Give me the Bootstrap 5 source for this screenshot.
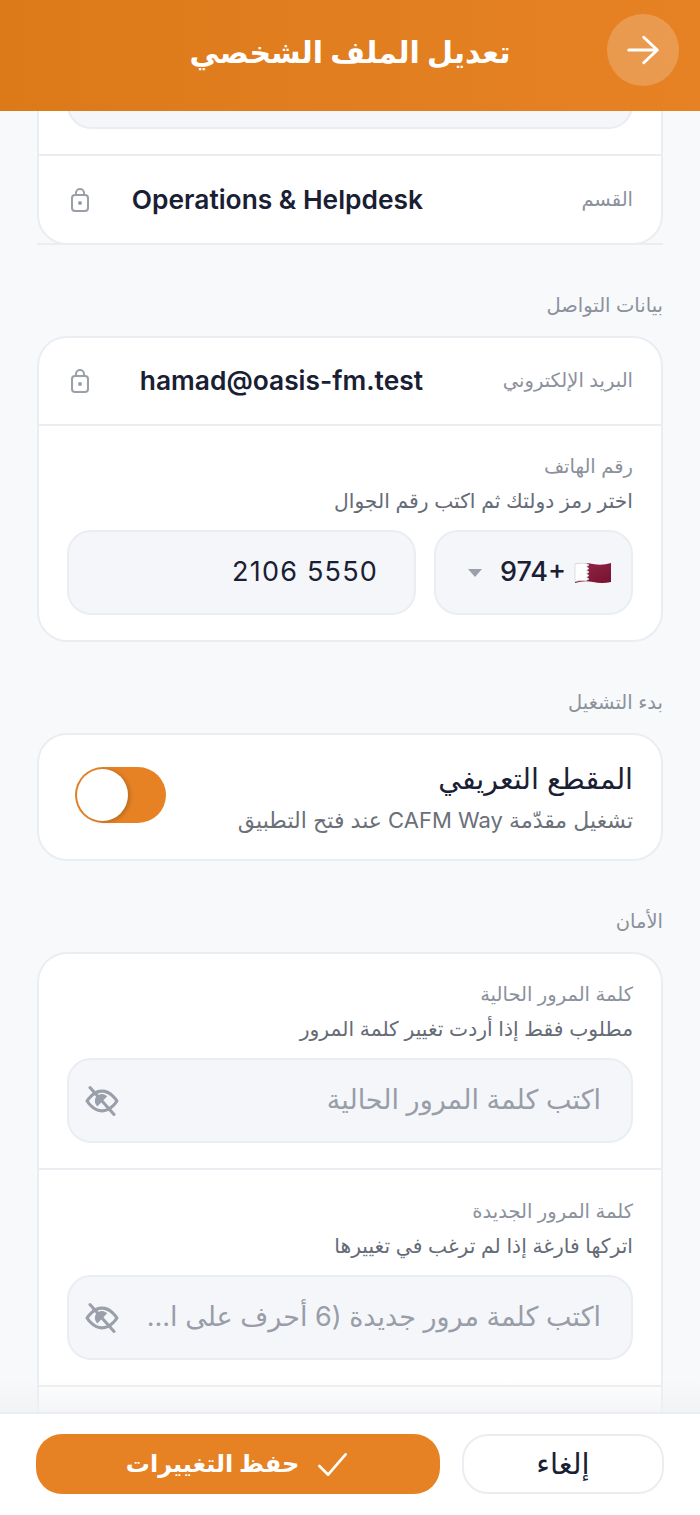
<!DOCTYPE html>
<html lang="ar" dir="rtl">
<head>
    <meta charset="UTF-8">
    <meta name="viewport" content="width=device-width, initial-scale=1.0">
    <title>تعديل الملف الشخصي</title>
    <link href="https://cdn.jsdelivr.net/npm/bootstrap@5.3.0/dist/css/bootstrap.min.css" rel="stylesheet">
    <script src="https://cdn.jsdelivr.net/npm/bootstrap@5.3.0/dist/js/bootstrap.bundle.min.js"></script>
    <style>
        :root { --brand: #e68224; --line: #eaedf1; --muted: #8b919c; --ink: #1a2033; }
        html, body { height: 1515px; overflow: hidden; }
        body { font-family: Inter, "DejaVu Sans", sans-serif; background-color: #f8f9fb; color: var(--ink); }
        .page-shell { height: 1515px; }
        .top-bar { height: 111px; background: linear-gradient(90deg, #dc7a1a, #e68224); padding: 0 21px; position: relative; flex-shrink: 0; z-index: 2; }
        .top-title { font-size: 30px; font-weight: 700; color: #fff; padding-bottom: 6px; }
        .back-btn { width: 72px; height: 72px; border-radius: 50%; background: rgba(255,255,255,.2); position: absolute; right: 21px; top: 14px; border: 0; padding: 0; }
        .scroll-area { flex: 1; overflow: hidden; position: relative; padding: 0 37px; }
        .scroll-area::after { content: ""; position: absolute; left: 0; right: 0; bottom: 0; height: 34px; background: linear-gradient(rgba(248,249,251,0), rgba(240,241,243,.75)); }
        .first-block { margin-top: -97px; }
        .first-block .value-row { height: 89px; }
        .section-title { font-size: 19.5px; color: var(--muted); line-height: 26px; margin: 47px 0 18px; }
        .form-block { background: #fff; border: 2px solid var(--line); border-radius: 30px; }
        .form-block.open-end { border-radius: 30px 30px 0 0; border-bottom: 0; }
        .value-row { height: 86px; padding: 0 28px; }
        .row-sep { border-top: 2px solid var(--line); }
        .under-line { border-bottom: 2px solid var(--line); margin: 0 -2px -2px; }
        .row-label { font-size: 19.5px; color: var(--muted); width: 210px; flex-shrink: 0; }
        .row-value { font-size: 26.35px; font-weight: 600; flex: 1; text-align: right; }
        .lock-icon { margin-left: 4px; flex-shrink: 0; }
        .field-group { padding: 27px 28px 25px; }
        .field-group.first-block-group { padding-top: 28px; }
        .field-group + .field-group { padding-top: 28px; }
        .field-title { font-size: 19.5px; line-height: 26px; color: var(--muted); margin-bottom: 9px; }
        .field-hint { font-size: 20.3px; line-height: 26px; color: #656b76; margin-bottom: 16px; }
        .input-box { height: 85px; background: #f4f6fa; border: 2px solid var(--line); border-radius: 24px; font-size: 27px; }
        .input-box.pass { padding: 0 30px 0 16px; color: #989da8; }
        .phone-num { width: 349px; padding: 0 36px 0 0; letter-spacing: 1.2px; }
        .code-box { width: 199px; padding: 0 19px 0 32px; font-weight: 500; }
        .down-tri { width: 0; height: 0; border: 7px solid transparent; border-top: 8px solid #9a9fa9; border-bottom: 0; }
        .toggle-row { height: 124px; padding: 0 28px 0 36px; }
        .toggle-text { padding-top: 3px; }
        .toggle-title { font-size: 28.5px; font-weight: 400; line-height: 34px; }
        .toggle-sub { font-size: 22px; line-height: 30px; color: #6b7079; margin-top: 9px; }
        .toggle-track { width: 91px; height: 56px; border-radius: 28px; background: var(--brand); position: relative; margin-bottom: 4px; }
        .toggle-knob { position: absolute; left: 2px; top: 2px; width: 51px; height: 52px; border-radius: 50%; background: #fff; box-shadow: 2px 1px 4px rgba(0,0,0,.2); }
        .bottom-bar { height: 103px; background: #fff; border-top: 2px solid var(--line); padding: 20px 36px 0; flex-shrink: 0; position: relative; z-index: 2; }
        .cancel-btn { width: 202px; height: 60px; border-radius: 26px; background: #fff; border: 2px solid var(--line); color: var(--ink); font-size: 29px; font-weight: 400; padding: 0; }
        .save-btn { width: 404px; height: 60px; border-radius: 26px; background: var(--brand); border: 0; color: #fff; font-size: 24px; font-weight: 700; padding: 0; }
    </style>
</head>
<body>
    <div class="page-shell d-flex flex-column">
        <header class="top-bar d-flex align-items-center justify-content-center">
            <button class="back-btn d-flex align-items-center justify-content-center" type="button">
                <svg width="36" height="36" viewBox="0 0 24 24" fill="none" stroke="#fff" stroke-width="2" stroke-linecap="round" stroke-linejoin="round"><path d="M2.500 12h19M12.500 3.500l9 8.500-9 8.500"/></svg>
            </button>
            <div class="top-title">تعديل الملف الشخصي</div>
        </header>

        <main class="scroll-area">
            <div class="form-block first-block">
                <div class="field-group first-block-group">
                    <div class="input-box"></div>
                </div>
                <div class="value-row row-sep d-flex align-items-center">
                    <span class="row-label">القسم</span>
                    <span class="row-value" dir="ltr">Operations &amp; Helpdesk</span>
                    <svg class="lock-icon" width="18" height="24" viewBox="0 0 18 24" fill="none" stroke="#9a9fa9" stroke-width="2"><rect x="1" y="7" width="16" height="16" rx="3"/><path d="M5 7V5a4 4 0 0 1 8 0v2"/><circle cx="9" cy="15" r="2" fill="#9a9fa9" stroke="none"/></svg>
                </div>
                <div class="under-line"></div>
            </div>

            <div class="section-title">بيانات التواصل</div>
            <div class="form-block">
                <div class="value-row d-flex align-items-center">
                    <span class="row-label">البريد الإلكتروني</span>
                    <span class="row-value" dir="ltr">hamad@oasis-fm.test</span>
                    <svg class="lock-icon" width="18" height="24" viewBox="0 0 18 24" fill="none" stroke="#9a9fa9" stroke-width="2"><rect x="1" y="7" width="16" height="16" rx="3"/><path d="M5 7V5a4 4 0 0 1 8 0v2"/><circle cx="9" cy="15" r="2" fill="#9a9fa9" stroke="none"/></svg>
                </div>
                <div class="field-group row-sep">
                    <div class="field-title">رقم الهاتف</div>
                    <div class="field-hint">اختر رمز دولتك ثم اكتب رقم الجوال</div>
                    <div class="d-flex justify-content-between">
                        <div class="input-box code-box d-flex align-items-center justify-content-between">
                            <span class="d-flex align-items-center gap-2">
                                <svg width="38" height="24" viewBox="0 0 38 24"><defs><linearGradient id="qa" x1="0" x2="1" y1="0" y2="1"><stop offset="0" stop-color="#96264a"/><stop offset="1" stop-color="#76122f"/></linearGradient></defs><path d="M1 3q9-2 18 0t18-1v19q-9 2-18 0t-18 1z" fill="url(#qa)"/><path d="M1 3q6-1.500 11-.7l3 1.700-2.500 1.700 2.500 1.800-2.500 1.700 2.500 1.800-2.500 1.700 2.500 1.800-2.500 1.700 2.500 1.800-3 1.700q-5-.700-11 .7z" fill="#fff" stroke="#d6d9df" stroke-width=".8"/></svg>
                                <span dir="ltr">974+</span>
                            </span>
                            <span class="down-tri"></span>
                        </div>
                        <div class="input-box phone-num d-flex align-items-center"><span dir="ltr">2106 5550</span></div>
                    </div>
                </div>
            </div>

            <div class="section-title">بدء التشغيل</div>
            <div class="form-block">
                <div class="toggle-row d-flex align-items-center justify-content-between">
                    <div class="toggle-text">
                        <div class="toggle-title">المقطع التعريفي</div>
                        <div class="toggle-sub">تشغيل مقدّمة CAFM Way عند فتح التطبيق</div>
                    </div>
                    <div class="toggle-track"><div class="toggle-knob"></div></div>
                </div>
            </div>

            <div class="section-title">الأمان</div>
            <div class="form-block open-end">
                <div class="field-group">
                    <div class="field-title">كلمة المرور الحالية</div>
                    <div class="field-hint">مطلوب فقط إذا أردت تغيير كلمة المرور</div>
                    <div class="input-box pass d-flex align-items-center justify-content-between">
                        <span>اكتب كلمة المرور الحالية</span>
                        <svg width="34" height="34" viewBox="0 0 24 24" fill="none" stroke="#9a9fa9" stroke-width="2.200" stroke-linecap="round"><path d="M1.500 12s4-7 10.500-7 10.500 7 10.500 7-4 7-10.500 7-10.500-7-10.500-7z"/><path d="M14 8.800a3.800 3.800 0 0 0-5.200 5.400z" fill="#9a9fa9"/><path d="M3.500 2.500l17 19"/></svg>
                    </div>
                </div>
                <div class="field-group row-sep">
                    <div class="field-title">كلمة المرور الجديدة</div>
                    <div class="field-hint">اتركها فارغة إذا لم ترغب في تغييرها</div>
                    <div class="input-box pass d-flex align-items-center justify-content-between">
                        <span>اكتب كلمة مرور جديدة (6 أحرف على ا…</span>
                        <svg width="34" height="34" viewBox="0 0 24 24" fill="none" stroke="#9a9fa9" stroke-width="2.200" stroke-linecap="round"><path d="M1.500 12s4-7 10.500-7 10.500 7 10.500 7-4 7-10.500 7-10.500-7-10.500-7z"/><path d="M14 8.800a3.800 3.800 0 0 0-5.200 5.400z" fill="#9a9fa9"/><path d="M3.500 2.500l17 19"/></svg>
                    </div>
                </div>
                <div class="field-group row-sep"></div>
            </div>
        </main>

        <footer class="bottom-bar d-flex justify-content-between">
            <button class="cancel-btn" type="button">إلغاء</button>
            <button class="save-btn d-flex align-items-center justify-content-center gap-3" type="button">
                <svg width="35" height="35" viewBox="0 0 24 24" fill="none" stroke="#fff" stroke-width="1.800" stroke-linecap="round" stroke-linejoin="round"><path d="M3 13l6 6L21 5"/></svg>
                <span>حفظ التغييرات</span>
            </button>
        </footer>
    </div>
</body>
</html>
